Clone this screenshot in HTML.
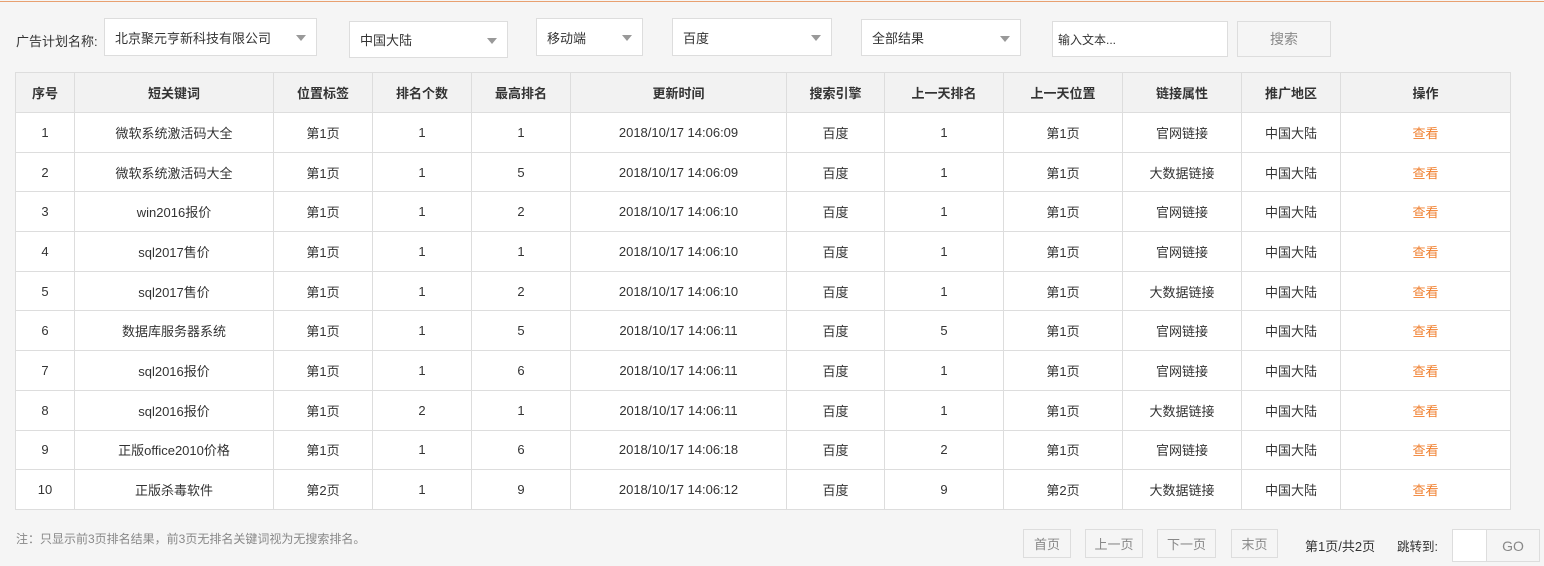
<!DOCTYPE html><html><head><meta charset="utf-8"><style>
*{margin:0;padding:0;box-sizing:border-box}
body{width:1544px;height:566px;background:#f5f5f5;font-family:"Liberation Sans","Noto Sans CJK SC",sans-serif;font-size:13px;color:#333;position:relative;overflow:hidden}
.a{position:absolute}
.top{left:0;top:0;width:1544px;height:2px;border-bottom:1px solid #e8a070;background:#f5f5f5}
.sel{position:absolute;background:#fff;border:1px solid #ddd;padding-left:10px;display:flex;align-items:center}
.arr:after{content:"";position:absolute;right:10px;top:50%;margin-top:-2px;border:5px solid transparent;border-top:6px solid #999;border-bottom:0}
table{position:absolute;left:15px;top:72px;width:1495px;border-collapse:collapse;background:#fff;table-layout:fixed}
td,th{border:1px solid #ddd;height:39.7px;text-align:center;font-size:13px;color:#333;padding:0}
th{background:#f2f2f2;font-weight:bold;height:40px}
td.o{color:#f08030}
.btn{position:absolute;border:1px solid #ddd;background:#f5f5f5;color:#888;display:flex;align-items:center;justify-content:center}
</style></head><body>
<div class="a top"></div>
<div class="a" style="left:16px;top:31px">广告计划名称:</div>
<div class="sel arr" style="left:104px;top:18px;width:213px;height:38px">北京聚元亨新科技有限公司</div>
<div class="sel arr" style="left:349px;top:21px;width:159px;height:37px">中国大陆</div>
<div class="sel arr" style="left:536px;top:18px;width:107px;height:38px">移动端</div>
<div class="sel arr" style="left:672px;top:18px;width:160px;height:38px">百度</div>
<div class="sel arr" style="left:861px;top:19px;width:160px;height:37px">全部结果</div>
<div class="sel" style="left:1052px;top:21px;width:176px;height:36px;padding-left:5px;font-size:12px">输入文本...</div>
<div class="btn" style="left:1237px;top:21px;width:94px;height:36px;font-size:14px">搜索</div>
<table>
<colgroup><col style="width:59px"><col style="width:199px"><col style="width:99px"><col style="width:99px"><col style="width:99px"><col style="width:216px"><col style="width:98px"><col style="width:119px"><col style="width:119px"><col style="width:119px"><col style="width:99px"><col style="width:170px"></colgroup>
<tr><th>序号</th><th>短关键词</th><th>位置标签</th><th>排名个数</th><th>最高排名</th><th>更新时间</th><th>搜索引擎</th><th>上一天排名</th><th>上一天位置</th><th>链接属性</th><th>推广地区</th><th>操作</th></tr>
<tr><td>1</td><td>微软系统激活码大全</td><td>第1页</td><td>1</td><td>1</td><td>2018/10/17 14:06:09</td><td>百度</td><td>1</td><td>第1页</td><td>官网链接</td><td>中国大陆</td><td class="o">查看</td></tr>
<tr><td>2</td><td>微软系统激活码大全</td><td>第1页</td><td>1</td><td>5</td><td>2018/10/17 14:06:09</td><td>百度</td><td>1</td><td>第1页</td><td>大数据链接</td><td>中国大陆</td><td class="o">查看</td></tr>
<tr><td>3</td><td>win2016报价</td><td>第1页</td><td>1</td><td>2</td><td>2018/10/17 14:06:10</td><td>百度</td><td>1</td><td>第1页</td><td>官网链接</td><td>中国大陆</td><td class="o">查看</td></tr>
<tr><td>4</td><td>sql2017售价</td><td>第1页</td><td>1</td><td>1</td><td>2018/10/17 14:06:10</td><td>百度</td><td>1</td><td>第1页</td><td>官网链接</td><td>中国大陆</td><td class="o">查看</td></tr>
<tr><td>5</td><td>sql2017售价</td><td>第1页</td><td>1</td><td>2</td><td>2018/10/17 14:06:10</td><td>百度</td><td>1</td><td>第1页</td><td>大数据链接</td><td>中国大陆</td><td class="o">查看</td></tr>
<tr><td>6</td><td>数据库服务器系统</td><td>第1页</td><td>1</td><td>5</td><td>2018/10/17 14:06:11</td><td>百度</td><td>5</td><td>第1页</td><td>官网链接</td><td>中国大陆</td><td class="o">查看</td></tr>
<tr><td>7</td><td>sql2016报价</td><td>第1页</td><td>1</td><td>6</td><td>2018/10/17 14:06:11</td><td>百度</td><td>1</td><td>第1页</td><td>官网链接</td><td>中国大陆</td><td class="o">查看</td></tr>
<tr><td>8</td><td>sql2016报价</td><td>第1页</td><td>2</td><td>1</td><td>2018/10/17 14:06:11</td><td>百度</td><td>1</td><td>第1页</td><td>大数据链接</td><td>中国大陆</td><td class="o">查看</td></tr>
<tr><td>9</td><td>正版office2010价格</td><td>第1页</td><td>1</td><td>6</td><td>2018/10/17 14:06:18</td><td>百度</td><td>2</td><td>第1页</td><td>官网链接</td><td>中国大陆</td><td class="o">查看</td></tr>
<tr><td>10</td><td>正版杀毒软件</td><td>第2页</td><td>1</td><td>9</td><td>2018/10/17 14:06:12</td><td>百度</td><td>9</td><td>第2页</td><td>大数据链接</td><td>中国大陆</td><td class="o">查看</td></tr>
</table>
<div class="a" style="left:16px;top:530px;color:#888;font-size:12px">注：只显示前3页排名结果，前3页无排名关键词视为无搜索排名。</div>
<div class="btn" style="left:1023px;top:529px;width:48px;height:29px">首页</div>
<div class="btn" style="left:1085px;top:529px;width:58px;height:29px">上一页</div>
<div class="btn" style="left:1157px;top:529px;width:59px;height:29px">下一页</div>
<div class="btn" style="left:1231px;top:529px;width:47px;height:29px">末页</div>
<div class="a" style="left:1305px;top:536px;font-size:13px">第1页/共2页</div>
<div class="a" style="left:1397px;top:536px;font-size:12.5px;white-space:nowrap">跳转到:</div>
<div class="a" style="left:1452px;top:529px;width:35px;height:33px;background:#fff;border:1px solid #ddd"></div>
<div class="btn" style="left:1486px;top:529px;width:54px;height:33px;font-size:14px">GO</div>
</body></html>
